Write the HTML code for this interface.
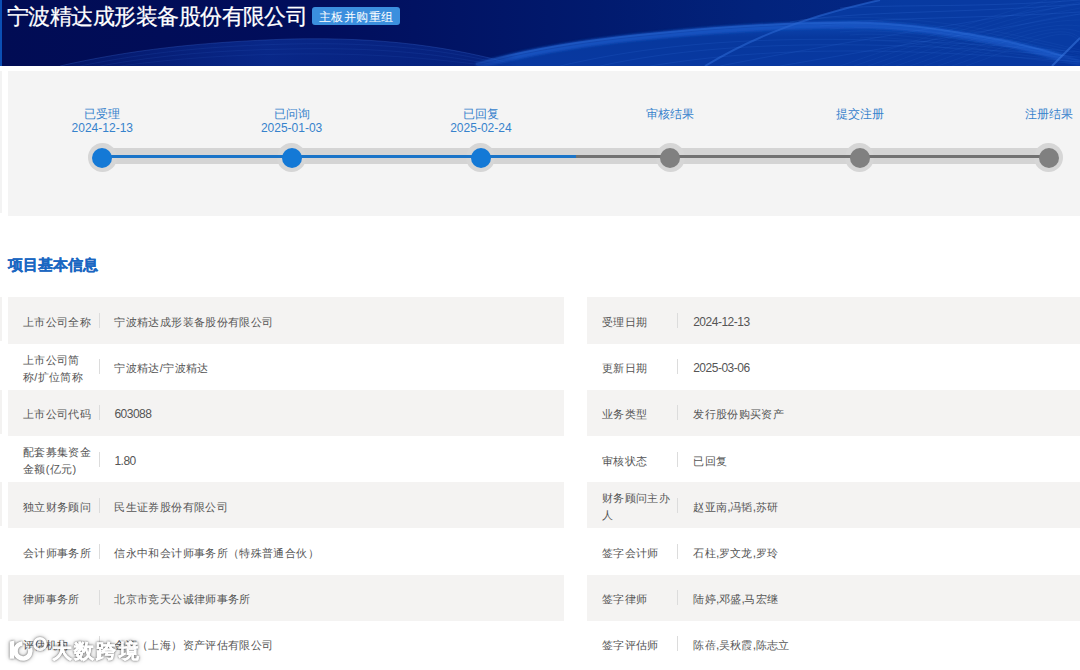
<!DOCTYPE html>
<html><head><meta charset="utf-8">
<style>
*{margin:0;padding:0;box-sizing:border-box}
html,body{width:1080px;height:670px;overflow:hidden;background:#fff;font-family:"Liberation Sans",sans-serif}
#banner{position:absolute;left:0;top:0;width:1080px;height:66px;background:#020c58;overflow:hidden}
#banner svg{position:absolute;left:0;top:0}
#title{position:absolute;left:7px;top:3px;font-size:22px;letter-spacing:-0.55px;line-height:28px;-webkit-text-stroke:0.25px #fff;color:#fff;white-space:nowrap}
#tag{position:absolute;left:312px;top:7px;width:88px;height:18px;border-radius:3px;background:#3b8fde;color:#fff;font-size:12px;letter-spacing:0.5px;line-height:20px;text-align:center}
#tl{position:absolute;left:8px;top:71px;width:1072px;height:145px;background:#f4f4f4}
.lbl{position:absolute;width:120px;margin-left:-60px;text-align:center;color:#3682cc;font-size:12px;line-height:14px}
.track{position:absolute;top:77px;height:16px;background:#d4d4d4}
.line{position:absolute;top:84px;height:3px}
.dot{position:absolute;width:29px;height:29px;margin-left:-14.5px;top:72px;border-radius:50%;background:#d6d6d6}
.dot.in{width:20px;height:20px;margin-left:-10px;top:76.5px}
#sec{position:absolute;left:8px;top:254px;font-size:15px;line-height:22px;font-weight:bold;color:#1b67c2;-webkit-text-stroke:0.3px #1b67c2}
.row{position:absolute;height:46.2px}
.g{background:#f4f3f2}
.k{position:absolute;left:15px;width:80px;top:2px;height:100%;display:flex;align-items:center;font-size:11px;letter-spacing:0.36px;line-height:17px;color:#555;white-space:nowrap}
.sep{position:absolute;top:50%;margin-top:-7.5px;height:15px;width:1px;background:#dcdcdc}
.v{position:absolute;top:2px;height:100%;display:flex;align-items:center;font-size:11px;letter-spacing:0.36px;line-height:17px;color:#555;white-space:nowrap}
.n{letter-spacing:-0.5px;font-size:12px}
#wm{position:absolute;left:0;top:630px;width:160px;height:40px;opacity:.92;filter:drop-shadow(0 0 1.2px rgba(0,0,0,.6)) drop-shadow(0 0 2.5px rgba(0,0,0,.25))}
#wmt{position:absolute;left:52px;top:9px;font-size:20px;line-height:24px;font-weight:bold;color:#fff;letter-spacing:2.2px;white-space:nowrap;-webkit-text-stroke:0.4px #fff}
</style></head><body>
<div id="banner">
<svg width="1080" height="66" viewBox="0 0 1080 66">
<defs>
<linearGradient id="bg" x1="0" y1="0" x2="1" y2="0">
<stop offset="0" stop-color="#010c54"/><stop offset="0.3" stop-color="#010e5c"/><stop offset="0.55" stop-color="#011a6e"/><stop offset="0.7" stop-color="#02237c"/><stop offset="1" stop-color="#052e92"/>
</linearGradient>
<linearGradient id="band" x1="0" y1="0" x2="0" y2="1">
<stop offset="0" stop-color="#0c44ae"/><stop offset="0.3" stop-color="#07389e"/><stop offset="1" stop-color="#0838a0"/>
</linearGradient>
<linearGradient id="bandx" x1="0" y1="0" x2="1" y2="0">
<stop offset="0" stop-color="#fff" stop-opacity="0"/><stop offset="0.12" stop-color="#fff" stop-opacity="1"/><stop offset="1" stop-color="#fff" stop-opacity="1"/>
</linearGradient>
<filter id="bl" x="-5%" y="-50%" width="110%" height="200%"><feGaussianBlur stdDeviation="1.3"/></filter>
<mask id="m1"><rect x="440" y="0" width="640" height="66" fill="url(#bandx)"/></mask>
<linearGradient id="lw" x1="0" y1="0" x2="1" y2="0">
<stop offset="0" stop-color="#0a2c90" stop-opacity="0.3"/><stop offset="0.45" stop-color="#0a2c90" stop-opacity="0.85"/><stop offset="1" stop-color="#0a2c90" stop-opacity="0.5"/>
</linearGradient>
</defs>
<rect width="1080" height="66" fill="url(#bg)"/>
<path d="M60,66 C130,50 200,42 290,39 C380,37 450,46 520,66 Z" fill="url(#lw)"/>
<g fill="none" stroke="#3a6ad0" stroke-width="1">
<path d="M60,66 C130,50 200,42 290,39 C380,37 450,46 520,66" stroke-opacity="0.3"/>
<path d="M80,66 C150,52 210,46 290,44 C380,42 450,50 510,66" stroke-opacity="0.14"/>
<path d="M100,66 C160,55 220,50 290,49 C380,47 440,54 500,66" stroke-opacity="0.14"/>
<path d="M120,66 C180,58 230,55 290,54 C370,53 430,58 490,66" stroke-opacity="0.12"/>
</g>
<path d="M705,66 C740,45 790,20 880,0 L1080,0 L1080,66 Z" fill="#0a40aa" fill-opacity="0.75"/>
<g fill="none" stroke="#3a78e0" stroke-opacity="0.2" stroke-width="1">
<path d="M790,22 C860,10 960,14 1080,4"/>
<path d="M775,30 C860,16 960,20 1080,12"/>
<path d="M840,8 C900,4 980,8 1080,0"/>
</g>
<g mask="url(#m1)">
<path d="M476,66 C522,53 582,42 660,35 C740,27 800,24 870,25 C920,27 960,35 1000,42 C1030,48 1060,57 1080,63 L1080,66 Z" fill="url(#band)"/>
<path d="M476,66 C522,53 582,42 660,35 C740,27 800,24 870,25 C920,27 960,35 1000,42 C1030,48 1060,57 1080,63" fill="none" stroke="#1a5ac8" stroke-width="7" stroke-opacity="0.75" filter="url(#bl)"/>
<path d="M476,66 C522,53 582,42 660,35 C740,27 800,24 870,25 C920,27 960,35 1000,42 C1030,48 1060,57 1080,63" fill="none" stroke="#2868d4" stroke-width="2" stroke-opacity="0.5" transform="translate(0,-2)"/>
</g>
<path d="M705,66 C740,45 790,20 880,0" fill="none" stroke="#2a66d0" stroke-width="2" stroke-opacity="0.6"/>
<path d="M1052,66 C1060,58 1070,48 1080,38 L1080,66 Z" fill="#04309a" fill-opacity="0.6"/>
<path d="M1052,66 C1060,58 1070,48 1080,38" fill="none" stroke="#3a78e0" stroke-width="2" stroke-opacity="0.55"/>
<g fill="none" stroke="#3a78e0" stroke-opacity="0.16" stroke-width="1">
<path d="M560,66 C680,38 820,30 1080,52"/>
<path d="M600,66 C700,44 840,36 1080,57"/>
<path d="M650,66 C750,50 860,44 1080,62"/>
<path d="M720,66 C800,50 920,30 1080,4"/>
<path d="M780,66 C860,52 960,36 1080,14"/>
</g>
<g fill="none" stroke="#4a88e8" stroke-opacity="0.10" stroke-width="0.8"><path d="M840,66 C900,45 980,20 1080,-10"/><path d="M854,66 C914,45 990,20 1080,-4"/><path d="M868,66 C928,45 1000,20 1080,2"/><path d="M882,66 C942,45 1010,20 1080,8"/><path d="M896,66 C956,45 1020,20 1080,14"/><path d="M910,66 C970,45 1030,20 1080,20"/><path d="M924,66 C984,45 1040,20 1080,26"/><path d="M938,66 C998,45 1050,20 1080,32"/><path d="M952,66 C1012,45 1060,20 1080,38"/><path d="M966,66 C1026,45 1070,20 1080,44"/><path d="M800,20 C900,10 1000,30 1080,50"/><path d="M810,23 C900,14 1000,34 1080,52"/><path d="M820,26 C900,18 1000,38 1080,54"/><path d="M830,29 C900,22 1000,42 1080,56"/><path d="M840,32 C900,26 1000,46 1080,58"/><path d="M850,35 C900,30 1000,50 1080,60"/><path d="M860,38 C900,34 1000,54 1080,62"/><path d="M870,41 C900,38 1000,58 1080,64"/></g>
<rect width="2" height="66" fill="#0b4fb5"/>
</svg>
<div id="title">宁波精达成形装备股份有限公司</div>
<div id="tag">主板并购重组</div>
</div>

<div id="tl">
<div class="track" style="left:94.3px;width:946.5px"></div>
<div class="dot" style="left:94.3px"></div>
<div class="dot" style="left:283.6px"></div>
<div class="dot" style="left:472.9px"></div>
<div class="dot" style="left:662.2px"></div>
<div class="dot" style="left:851.5px"></div>
<div class="dot" style="left:1040.8px"></div>
<div class="line" style="left:94.3px;width:473.3px;background:#1a74c8"></div>
<div class="line" style="left:567.6px;width:473.2px;background:#727272"></div>
<div class="dot in" style="left:94.3px;background:#1479d6"></div>
<div class="lbl" style="left:94.3px;top:36px">已受理<br>2024-12-13</div>
<div class="dot in" style="left:283.6px;background:#1479d6"></div>
<div class="lbl" style="left:283.6px;top:36px">已问询<br>2025-01-03</div>
<div class="dot in" style="left:472.9px;background:#1479d6"></div>
<div class="lbl" style="left:472.9px;top:36px">已回复<br>2025-02-24</div>
<div class="dot in" style="left:662.2px;background:#808080"></div>
<div class="lbl" style="left:662.2px;top:36px">审核结果<br></div>
<div class="dot in" style="left:851.5px;background:#808080"></div>
<div class="lbl" style="left:851.5px;top:36px">提交注册<br></div>
<div class="dot in" style="left:1040.8px;background:#808080"></div>
<div class="lbl" style="left:1040.8px;top:36px">注册结果<br></div>
</div>

<div style="position:absolute;left:0;top:71px;width:1.5px;height:142px;background:#f3f3f3"></div>
<div id="sec">项目基本信息</div>
<div style="position:absolute;left:0;top:297.4px;width:1.5px;height:44px;background:#f3f2f1"></div><div style="position:absolute;left:0;top:389.8px;width:1.5px;height:44px;background:#f3f2f1"></div><div style="position:absolute;left:0;top:482.2px;width:1.5px;height:44px;background:#f3f2f1"></div><div style="position:absolute;left:0;top:574.6px;width:1.5px;height:44px;background:#f3f2f1"></div>
<div id="rows">
<div class="row g" style="left:8px;top:297.4px;width:556.3px"><div class="k">上市公司全称</div><div class="sep" style="left:90.6px"></div><div class="v" style="left:106.4px">宁波精达成形装备股份有限公司</div></div>
<div class="row g" style="left:586.8px;top:297.4px;width:493.2px"><div class="k">受理日期</div><div class="sep" style="left:90.6px"></div><div class="v" style="left:106.4px"><span class="n">2024-12-13</span></div></div>
<div class="row" style="left:8px;top:343.6px;width:556.3px"><div class="k">上市公司简<br>称/扩位简称</div><div class="sep" style="left:90.6px"></div><div class="v" style="left:106.4px">宁波精达/宁波精达</div></div>
<div class="row" style="left:586.8px;top:343.6px;width:493.2px"><div class="k">更新日期</div><div class="sep" style="left:90.6px"></div><div class="v" style="left:106.4px"><span class="n">2025-03-06</span></div></div>
<div class="row g" style="left:8px;top:389.8px;width:556.3px"><div class="k">上市公司代码</div><div class="sep" style="left:90.6px"></div><div class="v" style="left:106.4px"><span class="n">603088</span></div></div>
<div class="row g" style="left:586.8px;top:389.8px;width:493.2px"><div class="k">业务类型</div><div class="sep" style="left:90.6px"></div><div class="v" style="left:106.4px">发行股份购买资产</div></div>
<div class="row" style="left:8px;top:436.0px;width:556.3px"><div class="k">配套募集资金<br>金额(亿元)</div><div class="sep" style="left:90.6px"></div><div class="v" style="left:106.4px"><span class="n">1.80</span></div></div>
<div class="row" style="left:586.8px;top:436.0px;width:493.2px"><div class="k">审核状态</div><div class="sep" style="left:90.6px"></div><div class="v" style="left:106.4px">已回复</div></div>
<div class="row g" style="left:8px;top:482.2px;width:556.3px"><div class="k">独立财务顾问</div><div class="sep" style="left:90.6px"></div><div class="v" style="left:106.4px">民生证券股份有限公司</div></div>
<div class="row g" style="left:586.8px;top:482.2px;width:493.2px"><div class="k">财务顾问主办<br>人</div><div class="sep" style="left:90.6px"></div><div class="v" style="left:106.4px">赵亚南<span class="n">,</span>冯韬<span class="n">,</span>苏研</div></div>
<div class="row" style="left:8px;top:528.4px;width:556.3px"><div class="k">会计师事务所</div><div class="sep" style="left:90.6px"></div><div class="v" style="left:106.4px">信永中和会计师事务所（特殊普通合伙）</div></div>
<div class="row" style="left:586.8px;top:528.4px;width:493.2px"><div class="k">签字会计师</div><div class="sep" style="left:90.6px"></div><div class="v" style="left:106.4px">石柱<span class="n">,</span>罗文龙<span class="n">,</span>罗玲</div></div>
<div class="row g" style="left:8px;top:574.6px;width:556.3px"><div class="k">律师事务所</div><div class="sep" style="left:90.6px"></div><div class="v" style="left:106.4px">北京市竞天公诚律师事务所</div></div>
<div class="row g" style="left:586.8px;top:574.6px;width:493.2px"><div class="k">签字律师</div><div class="sep" style="left:90.6px"></div><div class="v" style="left:106.4px">陆婷<span class="n">,</span>邓盛<span class="n">,</span>马宏继</div></div>
<div class="row" style="left:8px;top:620.8px;width:556.3px"><div class="k">评估机构</div><div class="sep" style="left:90.6px"></div><div class="v" style="left:106.4px">金证（上海）资产评估有限公司</div></div>
<div class="row" style="left:586.8px;top:620.8px;width:493.2px"><div class="k">签字评估师</div><div class="sep" style="left:90.6px"></div><div class="v" style="left:106.4px">陈蓓<span class="n">,</span>吴秋霞<span class="n">,</span>陈志立</div></div>
</div>
<div id="wm"><svg width="60" height="40" viewBox="0 0 60 40" style="position:absolute;left:0;top:0">
<path d="M9.7,11.5 L14.3,10.6 L14.3,28.8 L9.7,28.8 Z" fill="#fff"/>
<path d="M22.35,13.5 A7.5,7.5 0 1 0 30.05,18.4" fill="none" stroke="#fff" stroke-width="4.6"/>
<circle cx="40" cy="14" r="5.6" fill="none" stroke="#fff" stroke-width="2.6"/>
</svg><div id="wmt">大数跨境</div></div>
</body></html>
